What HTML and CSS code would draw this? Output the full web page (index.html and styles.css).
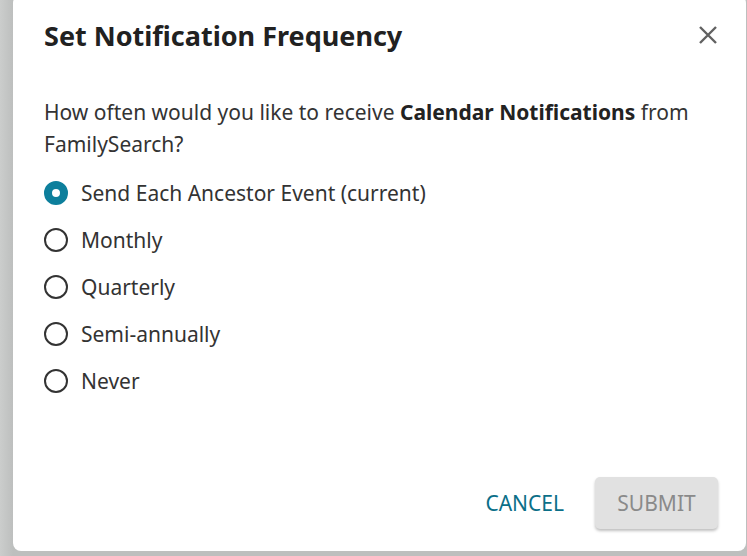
FILE: index.html
```html
<!DOCTYPE html>
<html>
<head>
<meta charset="utf-8">
<link rel="stylesheet" href="styles.css">
</head>
<body>
<div class="backdrop">
  <div class="dialog">
    <div class="header">
      <h1 class="title">Set Notification Frequency</h1>
      <button class="close" aria-label="Close">
        <svg width="20" height="20" viewBox="0 0 20 20"><path d="M2 2 L18 18 M18 2 L2 18" stroke="#616161" stroke-width="2.4" fill="none"/></svg>
      </button>
    </div>
    <p class="question">How often would you like to receive <b>Calendar Notifications</b> from FamilySearch?</p>
    <div class="options">
      <label class="option"><span class="radio checked"></span>Send Each Ancestor Event (current)</label>
      <label class="option"><span class="radio"></span>Monthly</label>
      <label class="option"><span class="radio"></span>Quarterly</label>
      <label class="option"><span class="radio"></span>Semi-annually</label>
      <label class="option"><span class="radio"></span>Never</label>
    </div>
    <div class="actions">
      <button class="btn-cancel">CANCEL</button>
      <button class="btn-submit">SUBMIT</button>
    </div>
  </div>
</div>
</body>
</html>
```
FILE: styles.css
```css
html, body {
  margin: 0;
  padding: 0;
  width: 747px;
  height: 556px;
  overflow: hidden;
  font-family: "Noto Sans", "Open Sans", sans-serif;
}
.backdrop {
  width: 747px;
  height: 556px;
  background: linear-gradient(90deg, #cbcdcc 0px, #bdbfbe 13px);
  padding: 0 1px 5px 13px;
  box-sizing: border-box;
  display: flex;
  align-items: flex-end;
}
.dialog {
  width: 733px;
  height: 556px;
  background: #fff;
  border-radius: 8px;
  box-sizing: border-box;
  padding: 0 28px 22px 31px;
  display: flex;
  flex-direction: column;
  color: #222;
}
.header {
  display: flex;
  align-items: center;
  justify-content: space-between;
  height: 80px;
}
.title {
  margin: 0;
  font-size: 27px;
  font-weight: 700;
  color: #212121;
}
.close {
  border: none;
  background: none;
  padding: 0;
  width: 20px;
  height: 20px;
  display: flex;
}
.question {
  margin: 21px 0 0;
  font-size: 21px;
  line-height: 32px;
  color: #333;
}
.question b {
  color: #222;
}
.options {
  display: flex;
  flex-direction: column;
  gap: 11px;
  margin-top: 15px;
}
.option {
  display: flex;
  align-items: center;
  height: 36px;
  font-size: 21px;
  color: #333;
}
.radio {
  width: 24px;
  height: 24px;
  border: 2px solid #333;
  border-radius: 50%;
  box-sizing: border-box;
  margin-right: 13px;
  flex: none;
}
.radio.checked {
  border: 8px solid #0d7f9c;
  background: #fff;
}
.actions {
  margin-top: auto;
  display: flex;
  justify-content: flex-end;
  align-items: center;
  gap: 14px;
}
.btn-cancel {
  border: none;
  background: none;
  font-family: inherit;
  font-size: 21px;
  color: #0b6f88;
  padding: 0 17px;
  height: 52px;
}
.btn-submit {
  border: none;
  background: #e1e1e1;
  font-family: inherit;
  font-size: 21px;
  color: #8a8a8a;
  width: 123px;
  height: 52px;
  border-radius: 5px;
  box-shadow: 0 2px 3px rgba(0,0,0,0.25);
}
```
